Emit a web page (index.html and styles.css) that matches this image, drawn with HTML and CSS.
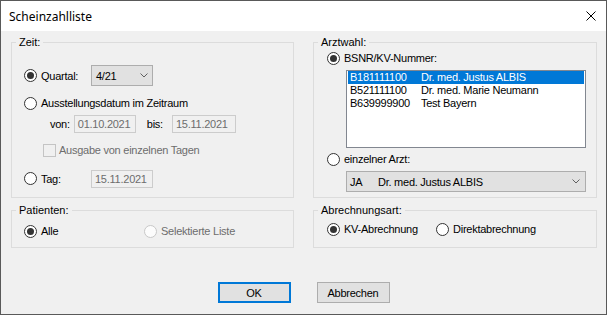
FILE: index.html
```html
<!DOCTYPE html>
<html lang="de">
<head>
    <meta charset="UTF-8" />
    <title>Scheinzahlliste</title>
    <link rel="stylesheet" href="styles.css">
</head>
<body>
<div class="window">
    <div class="titlebar">
        <span class="title">Scheinzahlliste</span>
        <svg class="close" width="10" height="10" viewBox="0 0 10 10">
            <path d="M0.5 0.5L9.5 9.5M9.5 0.5L0.5 9.5" stroke="#000" stroke-width="1" />
        </svg>
    </div>

    <div class="content">
        <div class="groups">
            <fieldset class="group">
                <legend>Zeit:</legend>
                <div class="row r-quartal">
                    <span class="radio on"></span>
                    <span class="opt">Quartal:</span>
                    <div class="combo small">
                        <span>4/21</span>
                        <svg class="chev" width="8" height="5" viewBox="0 0 8 5"><path d="M0.5 0.5L4 4L7.5 0.5" fill="none" stroke="#606060" /></svg>
                    </div>
                </div>
                <div class="row r-datum">
                    <span class="radio"></span>
                    <span class="lbl">Ausstellungsdatum im Zeitraum</span>
                </div>
                <div class="row r-range">
                    <span class="von">von:</span>
                    <span class="field w62">01.10.2021</span>
                    <span class="bis">bis:</span>
                    <span class="field w64">15.11.2021</span>
                </div>
                <div class="row r-check">
                    <span class="check"></span>
                    <span class="lbl disabled">Ausgabe von einzelnen Tagen</span>
                </div>
                <div class="row r-tag">
                    <span class="radio"></span>
                    <span class="opt">Tag:</span>
                    <span class="field w62">15.11.2021</span>
                </div>
            </fieldset>

            <fieldset class="group">
                <legend>Arztwahl:</legend>
                <div class="row r-bsnr">
                    <span class="radio on"></span>
                    <span class="lbl">BSNR/KV-Nummer:</span>
                </div>
                <div class="listbox">
                    <div class="item selected"><span class="nr">B181111100</span><span>Dr. med. Justus ALBIS</span></div>
                    <div class="item"><span class="nr">B521111100</span><span>Dr. med. Marie Neumann</span></div>
                    <div class="item"><span class="nr">B639999900</span><span>Test Bayern</span></div>
                </div>
                <div class="row r-arzt">
                    <span class="radio"></span>
                    <span class="lbl">einzelner Arzt:</span>
                </div>
                <div class="combo wide">
                    <span class="kz">JA</span>
                    <span class="name">Dr. med. Justus ALBIS</span>
                    <svg class="chev" width="8" height="5" viewBox="0 0 8 5"><path d="M0.5 0.5L4 4L7.5 0.5" fill="none" stroke="#606060" /></svg>
                </div>
            </fieldset>

            <fieldset class="group">
                <legend>Patienten:</legend>
                <div class="row r-pat">
                    <span class="choice c-alle"><span class="radio on"></span><span class="lbl">Alle</span></span>
                    <span class="choice"><span class="radio off"></span><span class="lbl disabled">Selektierte Liste</span></span>
                </div>
            </fieldset>

            <fieldset class="group">
                <legend>Abrechnungsart:</legend>
                <div class="row r-abr">
                    <span class="choice c-kv"><span class="radio on"></span><span class="lbl">KV-Abrechnung</span></span>
                    <span class="choice"><span class="radio"></span><span class="lbl">Direktabrechnung</span></span>
                </div>
            </fieldset>
        </div>

        <div class="buttons">
            <button class="btn default">OK</button>
            <button class="btn">Abbrechen</button>
        </div>
    </div>
</div>
</body>
</html>
```

FILE: styles.css
```css
body {
    margin: 0;
    font-family: "Liberation Sans", Arial, sans-serif;
    font-size: 11px;
    color: #000;
    background: #f0f0f0;
}

.window {
    width: 607px;
    height: 315px;
    box-sizing: border-box;
    border: 1px solid #595959;
    background: #f0f0f0;
    display: flex;
    flex-direction: column;
}

.titlebar {
    height: 30px;
    flex-shrink: 0;
    background: #fff;
    display: flex;
    align-items: center;
    justify-content: space-between;
    padding: 0 10px 0 8px;
}

.title {
    font-family: "Noto Sans", sans-serif;
    font-size: 12px;
}

.content {
    padding: 5px 0 0 10px;
}

.groups {
    display: grid;
    grid-template-columns: 283px 284px;
    grid-template-rows: 162px 44px;
    column-gap: 19px;
    row-gap: 6px;
}

.group {
    margin: 0;
    padding: 0;
    border: 1px solid #dcdcdc;
    min-width: 0;
}

.group legend {
    margin-left: 4px;
    padding: 0 3px;
    line-height: 13px;
}

.row {
    display: flex;
    align-items: center;
    letter-spacing: -0.25px;
}

.radio {
    width: 13px;
    height: 13px;
    box-sizing: border-box;
    border: 1px solid #333;
    border-radius: 50%;
    background: #fff;
    display: flex;
    align-items: center;
    justify-content: center;
    flex-shrink: 0;
}

.radio.on::after {
    content: "";
    width: 7px;
    height: 7px;
    border-radius: 50%;
    background: #333;
}

.radio.off {
    border-color: #c8c8c8;
    background: #fcfcfc;
}

.lbl, .opt {
    margin-left: 4px;
    white-space: nowrap;
}

.opt {
    width: 50px;
}

.disabled {
    color: #6d6d6d;
}

.choice {
    display: flex;
    align-items: center;
}

.combo {
    box-sizing: border-box;
    height: 21px;
    background: #e1e1e1;
    border: 1px solid #adadad;
    display: flex;
    align-items: center;
    position: relative;
}

.combo .chev {
    position: absolute;
    top: 7px;
}

.combo.small {
    width: 62px;
    padding-left: 4px;
}

.combo.small .chev {
    right: 4px;
}

.combo.wide {
    width: 240px;
    margin: 5px 0 0 32px;
    padding-left: 3px;
    letter-spacing: -0.25px;
}

.combo.wide .chev {
    right: 5px;
}

.kz {
    width: 28px;
}

.field {
    box-sizing: border-box;
    height: 18px;
    border: 1px solid #cccccc;
    background: #f0f0f0;
    color: #6d6d6d;
    padding-left: 3px;
    display: flex;
    align-items: center;
}

.w62 { width: 62px; }
.w64 { width: 64px; }

.check {
    width: 13px;
    height: 13px;
    box-sizing: border-box;
    border: 1px solid #c4c4c4;
    background: #f0f0f0;
}

/* Zeit */
.r-quartal { margin-top: 16px; height: 21px; padding-left: 12px; }
.r-datum { margin-top: 10px; height: 14px; padding-left: 12px; }
.r-range { margin-top: 5px; height: 18px; padding-left: 38px; }
.r-range .von { margin-right: 4px; }
.r-range .bis { margin: 0 9px 0 11px; }
.r-check { margin-top: 10px; height: 14px; padding-left: 31px; }
.r-check .lbl { margin-left: 3px; }
.r-tag { margin-top: 12px; height: 19px; padding-left: 12px; }

/* Arztwahl */
.r-bsnr { margin-top: 2px; height: 14px; padding-left: 13px; }
.r-arzt { margin-top: 4px; height: 14px; padding-left: 13px; }

.listbox {
    box-sizing: border-box;
    width: 240px;
    height: 78px;
    margin: 5px 0 0 32px;
    padding: 0 1px;
    background: #fff;
    border: 1px solid #828790;
    letter-spacing: -0.25px;
}

.item {
    height: 13px;
    line-height: 13px;
    padding-left: 2px;
    display: flex;
    white-space: nowrap;
}

.item.selected {
    background: #0078d7;
    color: #fff;
}

.item .nr {
    width: 71px;
}

/* Patienten, Abrechnungsart */
.r-pat { margin-top: 7px; height: 14px; padding-left: 12px; }
.c-alle { width: 120px; }
.r-abr { margin-top: 5px; height: 14px; padding-left: 13px; }
.c-kv { width: 109px; }

.buttons {
    display: flex;
    justify-content: center;
    gap: 26px;
    margin: 34px 0 0 -10px;
}

.btn {
    width: 73px;
    height: 21px;
    box-sizing: border-box;
    padding: 0;
    background: #e1e1e1;
    border: 1px solid #adadad;
    font-family: "Liberation Sans", Arial, sans-serif;
    font-size: 11px;
    letter-spacing: -0.25px;
    color: #000;
}

.btn.default {
    border: 2px solid #0078d7;
}
```
